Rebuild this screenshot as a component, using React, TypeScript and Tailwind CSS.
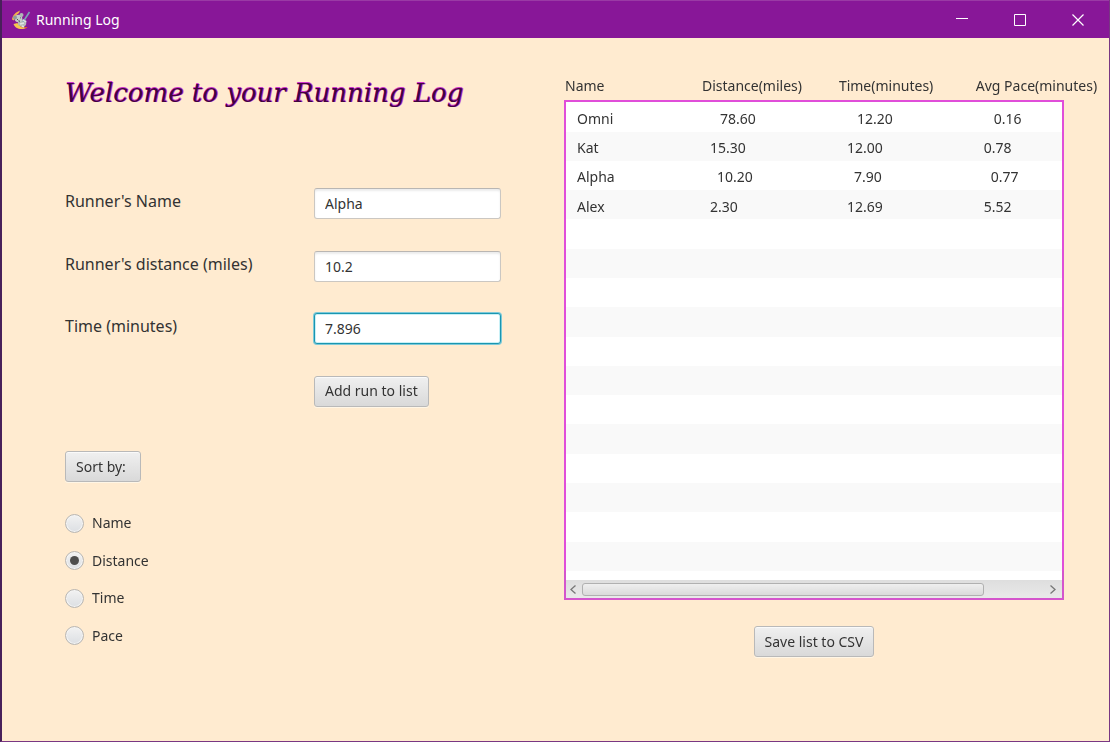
import { useState } from "react";

type Run = {
  name: string;
  distance: string;
  time: string;
  pace: string;
  indent: string;
};

const runs: Run[] = [
  { name: "Omni", distance: "78.60", time: "12.20", pace: "0.16", indent: "pl-[18px]" },
  { name: "Kat", distance: "15.30", time: "12.00", pace: "0.78", indent: "pl-[8px]" },
  { name: "Alpha", distance: "10.20", time: "7.90", pace: "0.77", indent: "pl-[15px]" },
  { name: "Alex", distance: "2.30", time: "12.69", pace: "5.52", indent: "pl-[8px]" },
];

const emptyRows = Array.from({ length: 12 }, (_, i) => i);
const sortKeys = ["Name", "Distance", "Time", "Pace"];

const buttonClass =
  "h-[31px] whitespace-nowrap rounded-[3px] border border-[#b9b9b9] bg-linear-to-b from-[#f0f0f0] to-[#d9d9d9] px-[10px] text-[14px] leading-5 shadow-[inset_0_1px_0_#fafafa,0_1px_0_#fff6e6]";
const inputClass =
  "h-[31px] w-full rounded-[3px] border border-[#cbc7c2] border-t-[#b9b6b3] bg-white px-[10px] text-[14px] leading-5 shadow-[inset_0_2px_2px_#ececec] outline-none focus:border-[#1a95b0] focus:shadow-[0_0_0_1px_#7cc9d8,inset_0_0_0_1px_#c8f0f6]";

function AppIcon() {
  return (
    <svg className="size-5" viewBox="0 0 20 20" aria-hidden="true">
      <path d="M9 .5C5 2 1.500 5 1 9.500l2 1C3.500 7 5 5 8 3z" fill="#f5b04a" />
      <path d="M2.500 14c1.500 4.500 8 7 14 3.200-4 .6-7.500-.7-10-4.200z" fill="#f7c64e" />
      <path d="M16 17.600c-3.500.6-7-1-9-4" stroke="#d95c2b" fill="none" />
      <path d="M7 11l6-2 2.500 2-.5 4-3 2.500-5-2.500z" fill="#b4bab8" />
      <circle cx="7.500" cy="8.500" r="3.800" fill="#c6cbca" />
      <circle cx="4" cy="7.500" r="2" fill="#929a9b" />
      <circle cx="10.500" cy="5" r="2" fill="#aeb6b5" />
      <path d="m6 9 .8.8M9 7.500l.7.500" stroke="#333b3b" />
      <path d="M7 10.500h2l-.5 2z" fill="#4c5556" />
      <path d="m12 12 6.500-10" stroke="#7fa3b8" strokeWidth="1.600" />
      <path d="m12 10 3 2M9 14l4-1M11 16l2 1" stroke="#e0e4e4" strokeWidth="1.500" />
    </svg>
  );
}

function TitleBar() {
  const control = "flex h-full w-[58px] items-center justify-center";
  return (
    <header className="flex h-[38px] items-center border-t border-[#9a3aa5] bg-[#881798] pr-0.5 pl-[9px] text-white">
      <AppIcon />
      <span className="ml-[5px] flex-1 text-[14px] leading-5">Running Log</span>
      <button type="button" aria-label="Minimize" className={control}>
        <svg className="size-3" viewBox="0 0 12 12" stroke="currentColor"><path d="M0 4.500h12" /></svg>
      </button>
      <button type="button" aria-label="Maximize" className={control}>
        <svg className="size-3" viewBox="0 0 12 12" stroke="currentColor" fill="none"><path d="M.5.500h11v11H.5z" /></svg>
      </button>
      <button type="button" aria-label="Close" className={control}>
        <svg className="size-3" viewBox="0 0 12 12" stroke="currentColor" strokeWidth="1.200"><path d="m.5.500 11 11M11.500.500l-11 11" /></svg>
      </button>
    </header>
  );
}

function RunForm() {
  const [name, setName] = useState("Alpha");
  const [distance, setDistance] = useState("10.2");
  const [time, setTime] = useState("7.896");
  const label = "whitespace-nowrap text-[16px] leading-[26px]";
  return (
    <form
      onSubmit={(e) => e.preventDefault()}
      className="mt-[77px] grid h-[219px] grid-cols-[249px_187px] content-between"
    >
      <label htmlFor="runner" className={label}>Runner's Name</label>
      <input id="runner" className={inputClass} value={name} onChange={(e) => setName(e.target.value)} />
      <label htmlFor="distance" className={label}>Runner's distance (miles)</label>
      <input id="distance" className={inputClass} value={distance} onChange={(e) => setDistance(e.target.value)} />
      <label htmlFor="time" className={label}>Time (minutes)</label>
      <input id="time" autoFocus className={`${inputClass} caret-transparent`} value={time} onChange={(e) => setTime(e.target.value)} />
      <button type="submit" className={`${buttonClass} col-start-2 justify-self-start`}>Add run to list</button>
    </form>
  );
}

function SortOptions() {
  const [sort, setSort] = useState("Distance");
  return (
    <section className="mt-11">
      <button type="button" className={`${buttonClass} pr-[14px]`}>Sort by:</button>
      <div role="radiogroup" aria-label="Sort by" className="mt-[31px] flex h-[133px] flex-col justify-between">
        {sortKeys.map((key) => (
          <label key={key} className="flex items-center gap-2 self-start text-[14px] leading-5">
            <input
              type="radio"
              name="sort"
              checked={sort === key}
              onChange={() => setSort(key)}
              className="grid size-[19px] appearance-none place-items-center rounded-full border border-[#b8b6b3] bg-linear-to-b from-[#f2f2f2] to-[#dcdfe3] shadow-[inset_0_0_0_1px_#f4f4f4] checked:before:size-[9px] checked:before:rounded-full checked:before:bg-[#4d4d4d] checked:before:content-['']"
            />
            {key}
          </label>
        ))}
      </div>
    </section>
  );
}

function RunList() {
  const heading = "overflow-visible whitespace-nowrap px-0 pt-px pb-0 text-left align-top font-normal";
  return (
    <section className="min-w-[440px] flex-1">
      <table className="h-[496px] w-full table-fixed border-collapse text-[14px] leading-5">
        <colgroup>
          <col className="w-[27.500%]" />
          <col className="w-[27.500%]" />
          <col className="w-[27.500%]" />
          <col />
        </colgroup>
        <thead>
          <tr className="h-[26px]">
            <th className={heading}>Name</th>
            <th className={heading}>Distance(miles)</th>
            <th className={heading}>Time(minutes)</th>
            <th className={heading}>Avg Pace(minutes)</th>
          </tr>
        </thead>
        <tbody className="border-x-2 border-t-2 border-[#e04ed9]">
          {runs.map((run) => (
            <tr key={run.name} className="bg-white even:bg-[#f9f9f9]">
              <td className="pt-1 pr-0 pb-0 pl-[11px]">{run.name}</td>
              <td className={`pt-1 pr-0 pb-0 ${run.indent}`}>{run.distance}</td>
              <td className={`pt-1 pr-0 pb-0 ${run.indent}`}>{run.time}</td>
              <td className={`pt-1 pr-0 pb-0 ${run.indent}`}>{run.pace}</td>
            </tr>
          ))}
          {emptyRows.map((row) => (
            <tr key={row} className="bg-white even:bg-[#f9f9f9]">
              <td colSpan={4} className="px-0 pt-1 pb-0">&nbsp;</td>
            </tr>
          ))}
        </tbody>
      </table>
      <div className="border-x-2 border-b-2 border-[#d455cc] bg-white pt-[9px]">
        <div className="flex h-[18px] items-center bg-linear-to-b from-[#dedede] to-[#e9e9e9] px-1">
          <button type="button" aria-label="Scroll left" className="w-3">
            <svg className="h-[9px] w-[6px]" viewBox="0 0 6 9" fill="none" stroke="#777" strokeWidth="1.300"><path d="M5.500.500 1 4.500l4.500 4" /></svg>
          </button>
          <div className="flex-1">
            <div className="h-[13px] w-[86%] rounded-[3px] border border-[#b0b0b0] bg-linear-to-b from-[#efefef] to-[#dadada]" />
          </div>
          <button type="button" aria-label="Scroll right" className="w-2">
            <svg className="h-[9px] w-[6px]" viewBox="0 0 6 9" fill="none" stroke="#777" strokeWidth="1.300"><path d="m.5.500 4.500 4-4.500 4" /></svg>
          </button>
        </div>
      </div>
      <div className="mt-[26px] flex justify-center">
        <button type="button" className={buttonClass}>Save list to CSV</button>
      </div>
    </section>
  );
}

export default function App() {
  return (
    <div className="flex min-h-screen flex-col border-r border-b border-l-2 border-r-[#793783] border-b-[#793783] border-l-[#48205a] bg-[#ffebd0] font-['Noto_Sans','Segoe_UI',sans-serif] text-[#333]">
      <TitleBar />
      <main className="flex flex-1 gap-[63px] pt-[37px] pr-[45px] pl-[63px]">
        <div>
          <h1 className="h-9 whitespace-nowrap font-['DejaVu_Serif',serif] text-[26px] leading-9 text-[#42033f] italic [text-shadow:1px_0_0_#cf35cc,0_-1px_0_#cf35cc]">
            Welcome to your Running Log
          </h1>
          <RunForm />
          <SortOptions />
        </div>
        <RunList />
      </main>
    </div>
  );
}
